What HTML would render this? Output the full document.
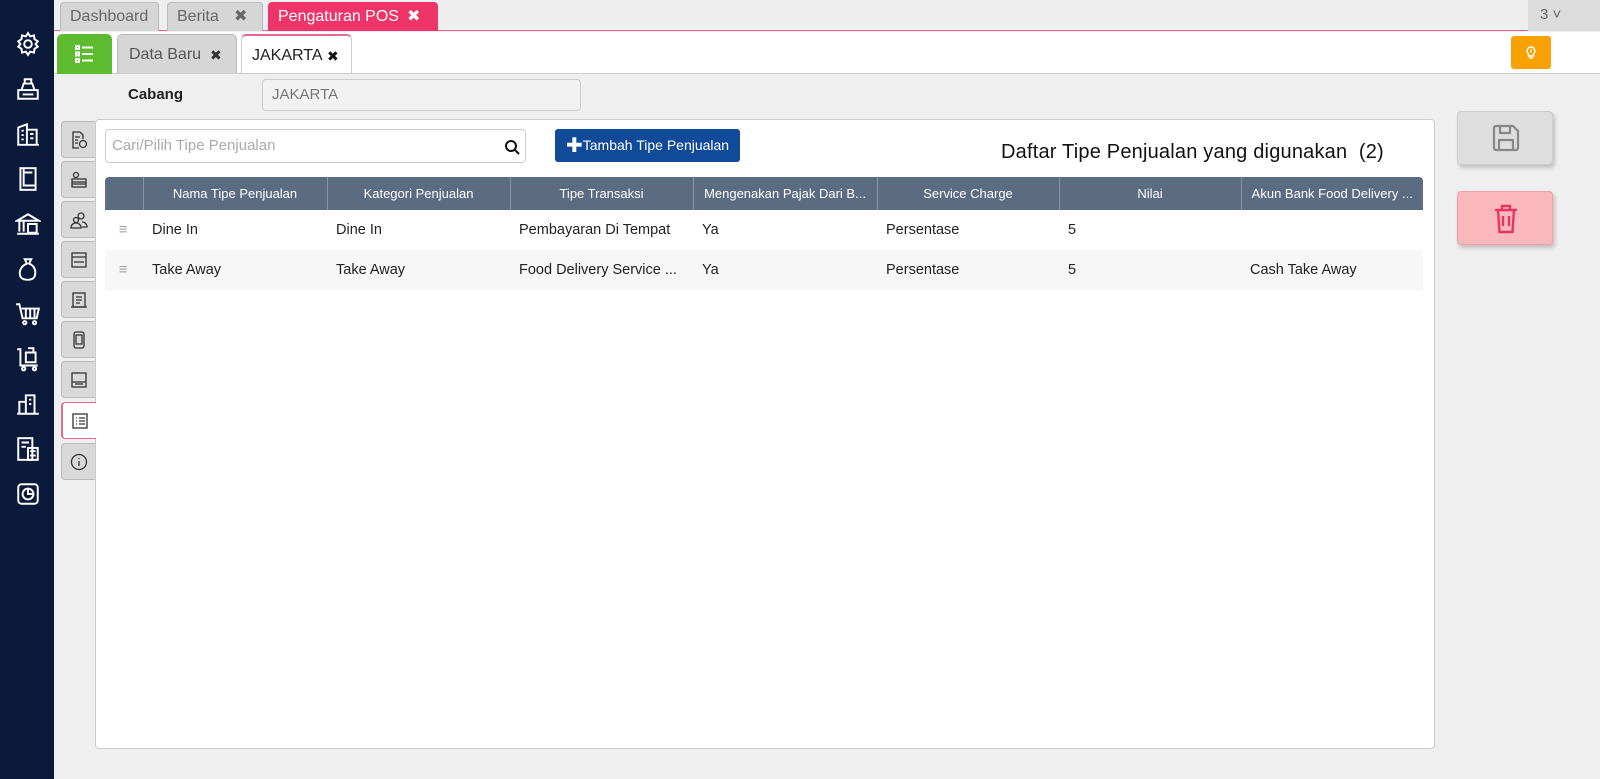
<!DOCTYPE html>
<html><head><meta charset="utf-8"><style>
*{box-sizing:border-box;margin:0;padding:0}
body{width:1600px;height:779px;overflow:hidden;background:#efefef;font-family:"Liberation Sans","DejaVu Sans",sans-serif;position:relative}
.side{position:absolute;left:0;top:0;width:54px;height:779px;background:#0b1a3b}
.side svg{position:absolute;left:15px;width:26px;height:26px}
.abs{position:absolute}
.tab{position:absolute;top:2px;height:29px;border:1px solid #bbb;border-bottom:none;border-radius:4px 4px 0 0;background:#d6d6d6;color:#666;font-size:16px;line-height:28px;padding-left:9px}
.tab2{position:absolute;top:34px;height:39px;border:1px solid #bbb;border-bottom:none;border-radius:5px 5px 0 0;background:#d6d6d6;color:#555;font-size:16px;line-height:40px;padding-left:11px}
.x{position:absolute;font-weight:bold}
.vt{position:absolute;left:61px;width:34px;height:37px;background:#d9d9d9;border:1px solid #bbb;border-right:none;border-radius:4px 0 0 4px}
.vt svg{position:absolute;left:8px;top:9px;width:18px;height:18px}
table{border-collapse:collapse;position:absolute;left:105px;top:177px;width:1318px;table-layout:fixed;font-size:14.5px}
th{background:#5b6b82;color:#fff;font-weight:normal;font-size:13px;height:33px;border-left:1px solid #8896a8;white-space:nowrap;overflow:hidden;padding:0 4px}
td{height:40px;padding-left:9px;color:#222;white-space:nowrap;overflow:hidden}
tr.g td{background:#f7f7f7}
</style></head><body>
<div class="side">
<svg style="top:31px" viewBox="0 0 24 24" fill="none" stroke="#fff" stroke-width="1.8"><circle cx="12" cy="12" r="3.5"/><path d="M12 2l2 3 3.5-1 .5 3.5 3 2-2 2.5 2 2.5-3 2-.5 3.5-3.5-1-2 3-2-3-3.5 1-.5-3.5-3-2 2-2.5-2-2.5 3-2 .5-3.5 3.5 1z"/></svg>
<svg style="top:76px" viewBox="0 0 24 24" fill="none" stroke="#fff" stroke-width="1.8"><rect x="3" y="13" width="18" height="8"/><path d="M6 13l2-6h8l2 6M9 3h6v4H9z M7 17h10"/></svg>
<svg style="top:121px" viewBox="0 0 24 24" fill="none" stroke="#fff" stroke-width="1.8"><path d="M3 22V6l8-3v19M11 8h9v14M2 22h20M6 9h2M6 13h2M6 17h2M14 12h3M14 16h3"/></svg>
<svg style="top:166px" viewBox="0 0 24 24" fill="none" stroke="#fff" stroke-width="1.8"><rect x="5" y="2" width="14" height="20"/><path d="M8 2v16h11M8 6h8"/></svg>
<svg style="top:211px" viewBox="0 0 24 24" fill="none" stroke="#fff" stroke-width="1.8"><path d="M2 9l10-6 10 6zM4 9v10M8 9v10M2 21h20M12 12h8v8h-8z"/></svg>
<svg style="top:256px" viewBox="0 0 24 24" fill="none" stroke="#fff" stroke-width="1.8"><path d="M9 3h6l-2 4c5 2 7 7 5 12-1 2-3 3-6 3s-6-1-7-3C3 14 6 9 11 7z"/></svg>
<svg style="top:301px" viewBox="0 0 24 24" fill="none" stroke="#fff" stroke-width="1.8"><path d="M1 3h3l3 13h13l2-9H6"/><circle cx="9" cy="20" r="1.5"/><circle cx="18" cy="20" r="1.5"/><path d="M10 7v9M14 7v9M18 7v9"/></svg>
<svg style="top:346px" viewBox="0 0 24 24" fill="none" stroke="#fff" stroke-width="1.8"><path d="M2 3h3v15h16M10 6h9v9h-9zM12 2h5v4"/><circle cx="8" cy="21" r="1.5"/><circle cx="18" cy="21" r="1.5"/></svg>
<svg style="top:391px" viewBox="0 0 24 24" fill="none" stroke="#fff" stroke-width="1.8"><path d="M2 21h20M4 21V10h6v11M10 21V4h8v17M13 8h2M13 12h2"/></svg>
<svg style="top:436px" viewBox="0 0 24 24" fill="none" stroke="#fff" stroke-width="1.8"><rect x="3" y="2" width="13" height="20"/><rect x="12" y="11" width="9" height="11"/><path d="M6 6h7M6 10h4M14 14h5M14 18h5"/></svg>
<svg style="top:481px" viewBox="0 0 24 24" fill="none" stroke="#fff" stroke-width="1.8"><rect x="3" y="3" width="18" height="18" rx="3"/><circle cx="12" cy="12" r="5"/><path d="M12 7v5h5"/></svg>
</div>
<div class="abs" style="left:54px;top:0;width:1546px;height:31px;background:#eee;border-bottom:1px solid #e56a92"></div>
<div class="tab" style="left:60px;width:99px">Dashboard</div>
<div class="tab" style="left:167px;width:96px">Berita<span class="x" style="left:66px">✖</span></div>
<div class="tab" style="left:268px;width:170px;background:#ee3468;border-color:#ee3468;color:#fff">Pengaturan POS<span class="x" style="left:138px">✖</span></div>
<div class="abs" style="left:1528px;top:0;width:72px;height:31px;background:#dcdcdc;color:#666;font-size:15px;line-height:30px;padding-left:12px">3 ˅</div>
<div class="abs" style="left:54px;top:32px;width:1546px;height:42px;background:#fff;border-bottom:1px solid #ccc"></div>
<div class="abs" style="left:57px;top:34px;width:55px;height:40px;background:#5cbb2e;border-radius:5px 5px 0 0">
<svg style="position:absolute;left:18px;top:11px" width="19" height="18" viewBox="0 0 19 18" fill="none" stroke="#fff" stroke-width="2"><rect x="1" y="1" width="3" height="3"/><rect x="1" y="7.5" width="3" height="3"/><rect x="1" y="14" width="3" height="3"/><path d="M7 2.5h11M7 9h11M7 15.5h11"/></svg></div>
<div class="tab2" style="left:117px;width:120px">Data Baru<span class="x" style="left:92px;color:#333;font-size:14px">✖</span></div>
<div class="tab2" style="left:241px;width:111px;background:#fff;border-color:#e56a92 #ccc #ccc;border-top:2px solid #e56a92;color:#222;padding-left:10px">JAKARTA<span class="x" style="left:85px;color:#111;font-size:14px">✖</span></div>
<div class="abs" style="left:1511px;top:36px;width:40px;height:33px;background:#f8a100;border-radius:3px">
<svg style="position:absolute;left:12px;top:8px" width="16" height="16" viewBox="0 0 16 16" fill="none" stroke="#fff" stroke-width="1.5"><path d="M8 3a4 4 0 0 0-2.5 7v2h5v-2A4 4 0 0 0 8 3zM6 14h4M8 5.5v3"/></svg></div>
<div class="abs" style="left:128px;top:86px;font-size:15px;font-weight:bold;color:#222">Cabang</div>
<div class="abs" style="left:262px;top:79px;width:319px;height:32px;background:#f2f2f2;border:1px solid #ccc;border-radius:4px;color:#777;font-size:15px;line-height:30px;padding-left:9px">JAKARTA</div>
<div class="abs" style="left:95px;top:119px;width:1340px;height:630px;background:#fff;border:1px solid #ccc;border-radius:4px"></div>
<div class="vt" style="top:121px"><svg viewBox="0 0 18 18" fill="none" stroke="#333" stroke-width="1.3"><path d="M10 1H3v16h6M10 1l3 3v4M5 6h5M5 9h3M5 12h3"/><circle cx="13" cy="13" r="3.5"/></svg></div>
<div class="vt" style="top:161px"><svg viewBox="0 0 18 18" fill="none" stroke="#333" stroke-width="1.3"><circle cx="6" cy="4" r="2.5"/><rect x="2" y="8" width="14" height="8"/><path d="M2 11h14M2 13h14"/></svg></div>
<div class="vt" style="top:201px"><svg viewBox="0 0 18 18" fill="none" stroke="#333" stroke-width="1.3"><circle cx="11" cy="5" r="3"/><circle cx="6" cy="9" r="2.5"/><path d="M1 17c0-3 2-5 5-5s5 2 5 5zM12 11c3 0 5 2 5 5h-5"/></svg></div>
<div class="vt" style="top:241px"><svg viewBox="0 0 18 18" fill="none" stroke="#333" stroke-width="1.3"><rect x="2" y="2" width="14" height="14"/><path d="M2 6h14M4 11h10"/></svg></div>
<div class="vt" style="top:281px"><svg viewBox="0 0 18 18" fill="none" stroke="#333" stroke-width="1.3"><rect x="3" y="2" width="12" height="14"/><path d="M6 6h6M6 9h6M6 12h4M1 16h16"/></svg></div>
<div class="vt" style="top:321px"><svg viewBox="0 0 18 18" fill="none" stroke="#333" stroke-width="1.3"><rect x="4" y="1" width="10" height="16" rx="2"/><path d="M6 4h6v9H6z"/></svg></div>
<div class="vt" style="top:361px"><svg viewBox="0 0 18 18" fill="none" stroke="#333" stroke-width="1.3"><rect x="2" y="2" width="14" height="14"/><path d="M2 11h14M5 13h8"/></svg></div>
<div class="vt" style="top:402px;left:61px;width:35px;background:#fff;border-color:#e56a92;border-left:2px solid #e56a92"><svg viewBox="0 0 18 18" fill="none" stroke="#333" stroke-width="1.3"><rect x="2" y="2" width="14" height="14"/><path d="M5 6h1M8 6h6M5 9h1M8 9h6M5 12h1M8 12h6"/></svg></div>
<div class="vt" style="top:443px"><svg viewBox="0 0 18 18" fill="none" stroke="#333" stroke-width="1.3"><circle cx="9" cy="9" r="7.5"/><path d="M9 8v5M9 5v1"/></svg></div>
<div class="abs" style="left:105px;top:129px;width:421px;height:34px;border:1px solid #ccc;border-radius:4px;color:#aaa;font-size:15px;line-height:32px;padding-left:6px">Cari/Pilih Tipe Penjualan
<svg style="position:absolute;right:5px;top:9px" width="16" height="16" viewBox="0 0 16 16" fill="none" stroke="#111" stroke-width="2"><circle cx="7" cy="7" r="5"/><path d="M11 11l4 4"/></svg></div>
<div class="abs" style="left:555px;top:129px;width:185px;height:33px;background:#124a9a;border-radius:3px;color:#fff;font-size:14px;line-height:33px;padding-left:11px"><b style="font-size:20px;vertical-align:-2px">✚</b>Tambah Tipe Penjualan</div>
<div class="abs" style="left:1001px;top:141px;font-size:20px;color:#111;letter-spacing:.2px">Daftar Tipe Penjualan yang digunakan&nbsp; (2)</div>
<table>
<colgroup><col style="width:38px"><col style="width:184px"><col style="width:183px"><col style="width:183px"><col style="width:184px"><col style="width:182px"><col style="width:182px"><col style="width:182px"></colgroup>
<tr><th style="border-left:none;border-radius:4px 0 0 0"></th><th>Nama Tipe Penjualan</th><th>Kategori Penjualan</th><th>Tipe Transaksi</th><th>Mengenakan Pajak Dari B...</th><th>Service Charge</th><th>Nilai</th><th style="border-radius:0 4px 0 0">Akun Bank Food Delivery ...</th></tr>
<tr><td style="color:#999;padding-left:14px">≡</td><td>Dine In</td><td>Dine In</td><td>Pembayaran Di Tempat</td><td>Ya</td><td>Persentase</td><td>5</td><td></td></tr>
<tr class="g"><td style="color:#999;padding-left:14px">≡</td><td>Take Away</td><td>Take Away</td><td>Food Delivery Service ...</td><td>Ya</td><td>Persentase</td><td>5</td><td>Cash Take Away</td></tr>
</table>
<div class="abs" style="left:1457px;top:111px;width:96px;height:54px;background:#dedede;border:1px solid #ccc;border-radius:4px;box-shadow:2px 3px 4px rgba(0,0,0,.2)">
<svg style="position:absolute;left:33px;top:11px" width="30" height="30" viewBox="0 0 30 30" fill="none" stroke="#888" stroke-width="2.2"><path d="M3 5a2 2 0 0 1 2-2h17l5 5v17a2 2 0 0 1-2 2H5a2 2 0 0 1-2-2zM9 3v7h10V3M8 27V17h14v10"/></svg></div>
<div class="abs" style="left:1457px;top:191px;width:96px;height:54px;background:#fbb8bd;border:1px solid #f5a0a8;border-radius:4px;box-shadow:2px 3px 4px rgba(0,0,0,.2)">
<svg style="position:absolute;left:35px;top:12px" width="26" height="30" viewBox="0 0 26 30" fill="none" stroke="#e8345f" stroke-width="2.4"><path d="M2 6h22M9 6V2h8v4M5 6l1.5 22h13L21 6M10 12v10M16 12v10"/></svg></div>
</body></html>
